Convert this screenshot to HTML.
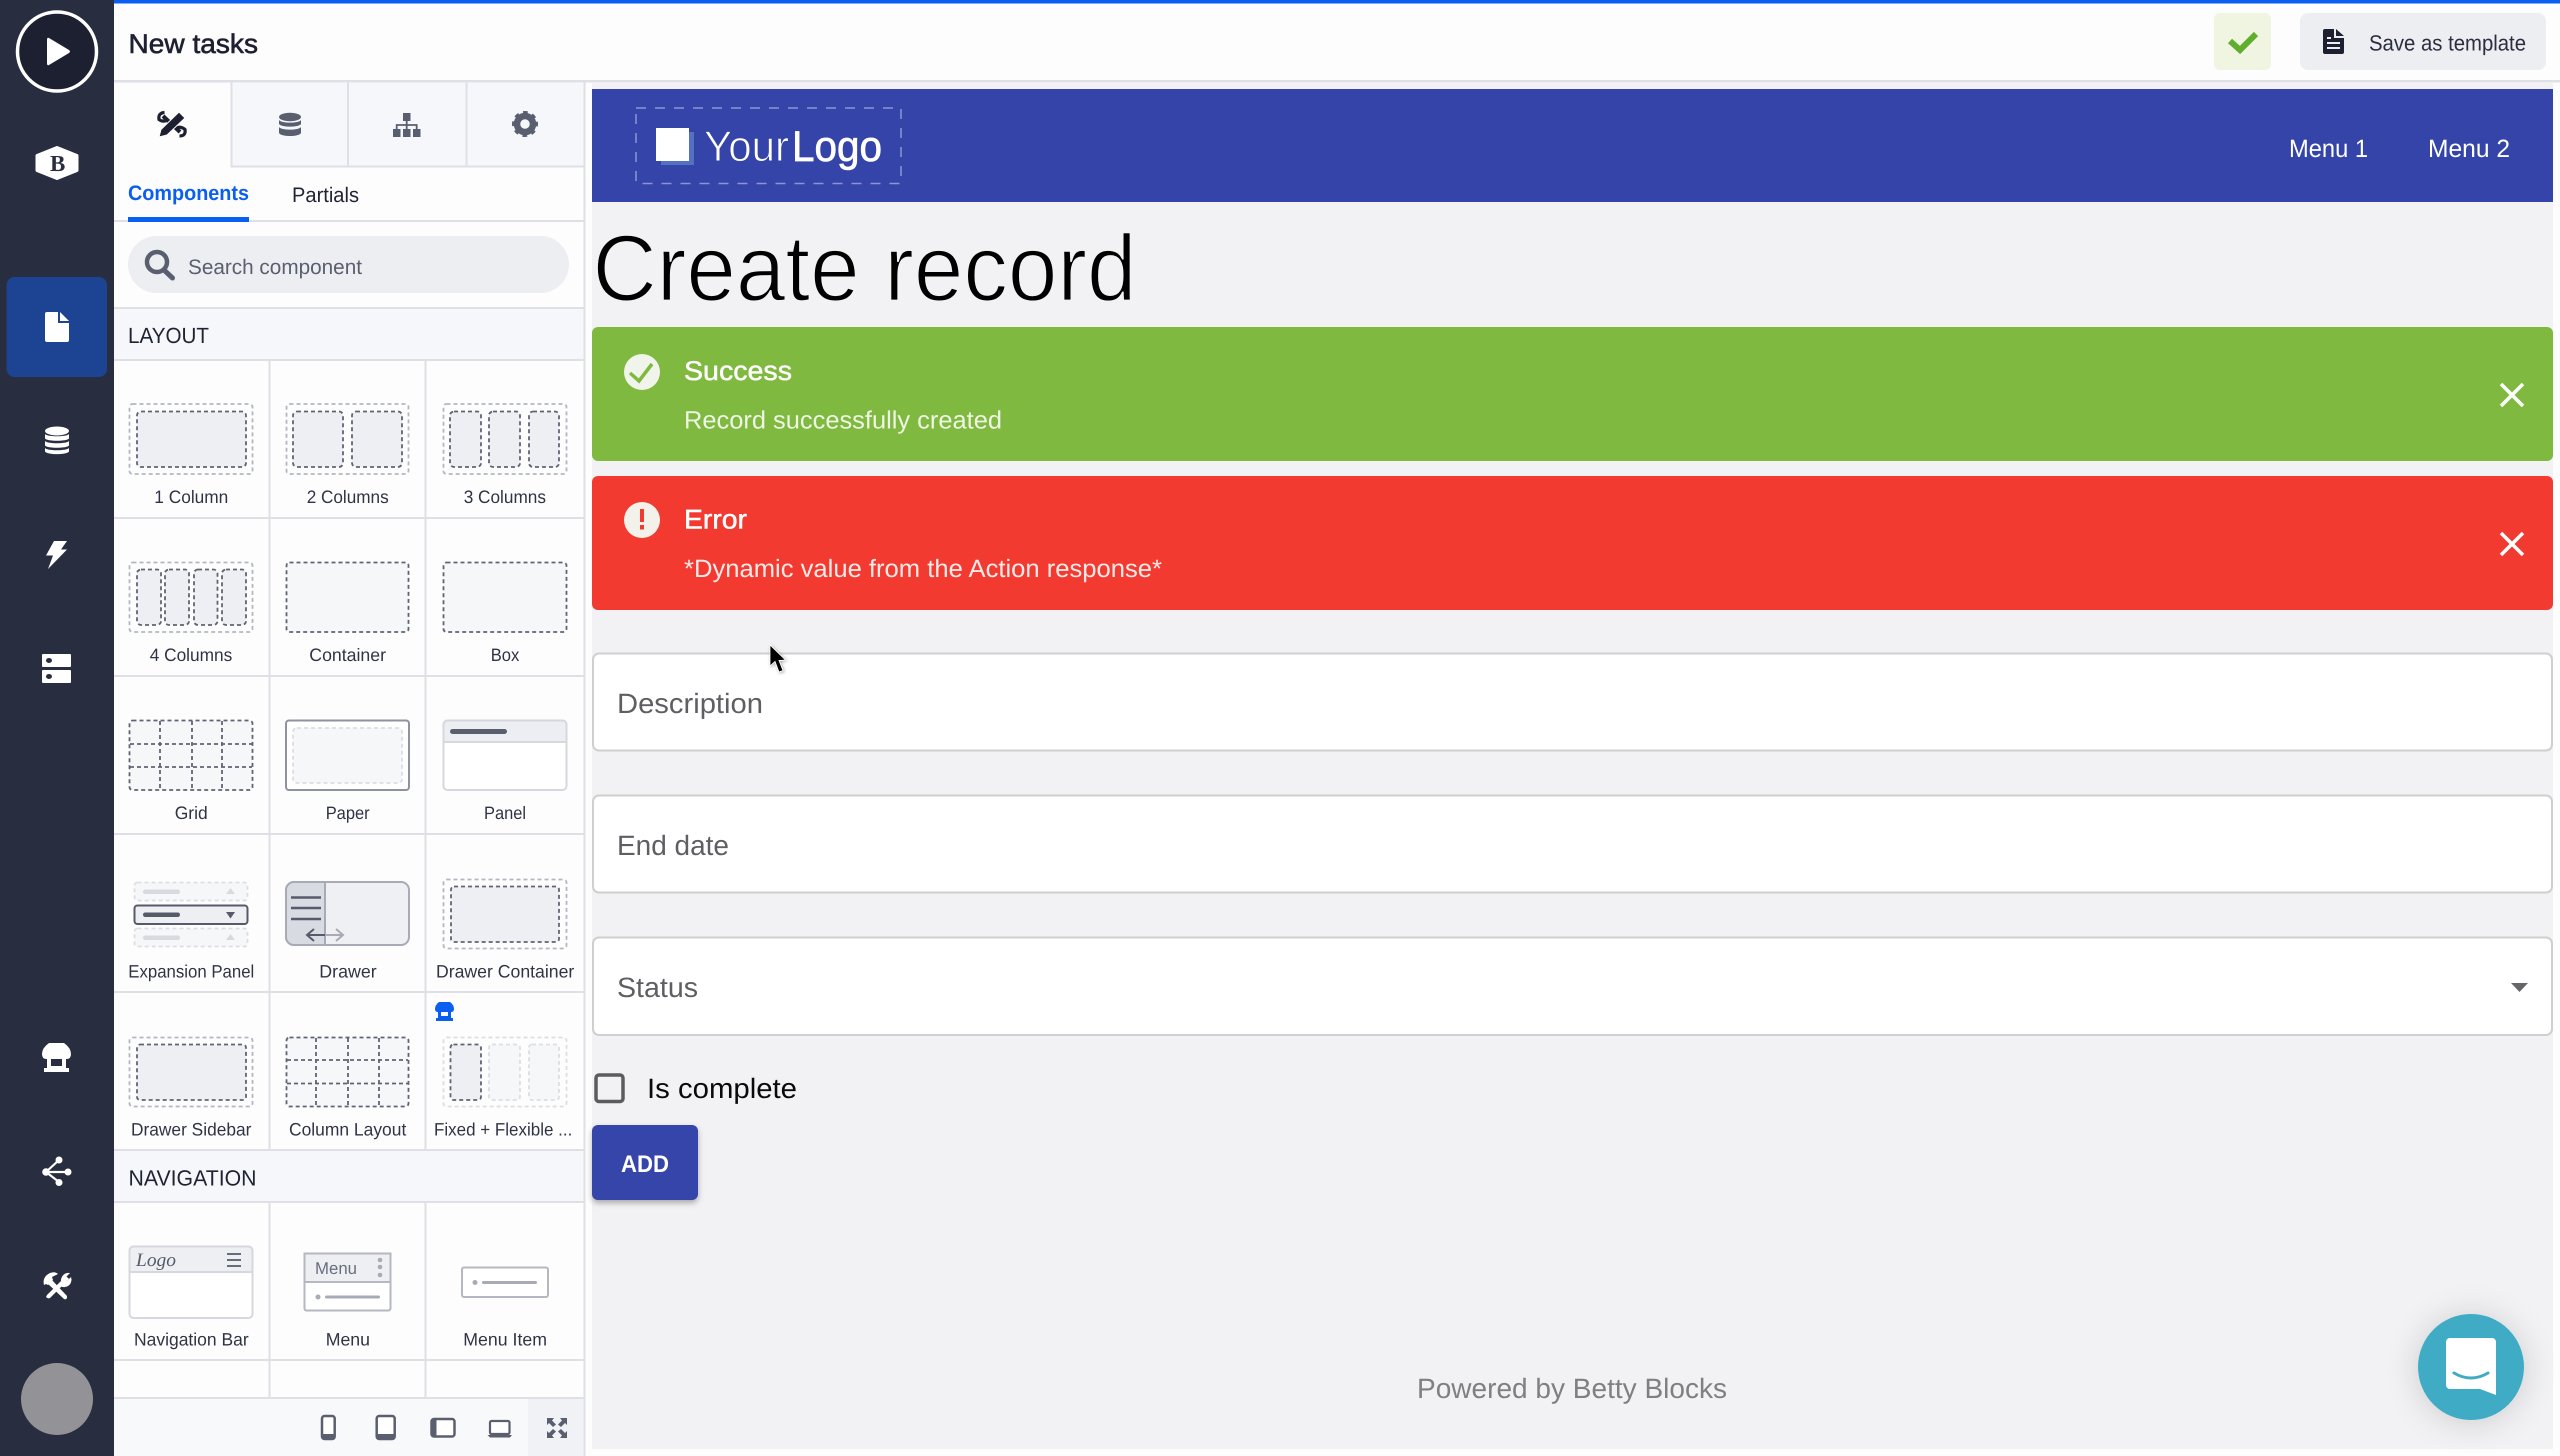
<!DOCTYPE html>
<html lang="en"><head><meta charset="utf-8"><title>New tasks</title>
<style>
html,body{margin:0;padding:0;width:2560px;height:1456px;overflow:hidden;background:#fdfdfe}
svg{position:absolute;left:0;top:0;display:block}
text{font-family:"Liberation Sans",Arial,sans-serif;text-rendering:geometricPrecision}
.lb{font-size:18px;fill:#2f3344}
.o{fill:none;stroke:#b4b7c1;stroke-width:1.800;stroke-dasharray:4 3}
.oo{fill:none;stroke:#dcdee3;stroke-width:1.800;stroke-dasharray:4 3}
.i{fill:#eeeff2;stroke:#5f6475;stroke-width:1.800;stroke-dasharray:4 3}
.il{fill:#f6f7f9;stroke:#dcdee3;stroke-width:1.800;stroke-dasharray:4 3}
.d{fill:#f6f7f9;stroke:#5f6475;stroke-width:1.800;stroke-dasharray:4 3}
.dl{fill:none;stroke:#5f6475;stroke-width:1.800;stroke-dasharray:4 3}
.ln{stroke:#dfe0e6;stroke-width:2;fill:none}
.hi{fill:#5a5f70}
.w{fill:#fff}
</style></head>
<body>
<svg width="2560" height="1456" viewBox="0 0 2560 1456" xmlns="http://www.w3.org/2000/svg">
<!-- backgrounds -->
<rect width="2560" height="1456" fill="#fdfdfe"/>
<rect x="114" y="0" width="2446" height="3.500" fill="#0a5ff0"/>
<rect x="114" y="80" width="2446" height="2.500" fill="#dfe0e6"/>
<rect x="0" y="0" width="114" height="1456" fill="#282d40"/>

<!-- content area -->
<rect x="592" y="83" width="1961" height="1366" fill="#f2f1f4"/>
<rect x="592" y="89" width="1961" height="113" fill="#3544a9"/>

<!-- sidebar -->
<circle cx="57" cy="51.500" r="39.500" fill="#1d2030" stroke="#fff" stroke-width="3.500"/>
<path d="M49 38 L69 50 Q71 51.500 69 53 L49 65 Q47 66 47 63 V40 Q47 37 49 38Z" fill="#fff"/>
<path d="M57 147.500 L77 155.500 V170.500 L57 178.500 L37 170.500 V155.500Z" fill="#fff" stroke="#fff" stroke-width="3" stroke-linejoin="round"/>
<text x="50" y="171" style="font-family:'Liberation Serif',serif;font-weight:bold;font-size:23px" fill="#282d40">B</text>
<rect x="6.500" y="277" width="100.500" height="100" rx="8" fill="#1d4493"/>
<path d="M47 312 H58 V323 H69 V340 a2 2 0 0 1 -2 2 H47 a2 2 0 0 1 -2 -2 V314 a2 2 0 0 1 2 -2Z M60 312 L69 321 H60Z" fill="#fff"/>
<!-- db -->
<g fill="#fff">
<ellipse cx="57" cy="431" rx="12" ry="4.500"/>
<path d="M45 434 c2 3 22 3 24 0 v4.500 c-2 3 -22 3 -24 0Z"/>
<path d="M45 441 c2 3 22 3 24 0 v4.500 c-2 3 -22 3 -24 0Z"/>
<path d="M45 448 c2 3 22 3 24 0 v3.500 c-2 3.500 -22 3.500 -24 0Z"/>
</g>
<path d="M54 541 H67 L61 549.500 H67 L48 569 L53 555.500 H46Z" fill="#fff"/>
<g>
<rect x="42" y="654" width="29" height="13" rx="1" fill="#fff"/>
<rect x="42" y="670" width="29" height="13" rx="1" fill="#fff"/>
<ellipse cx="49" cy="660.500" rx="3" ry="2.500" fill="#282d40"/>
<ellipse cx="49" cy="676.500" rx="3" ry="2.500" fill="#282d40"/>
</g>
<path d="M49 1043 H64 Q71 1048 71 1054 Q71 1059 66.500 1059 H46.500 Q42 1059 42 1054 Q42 1048 49 1043Z M47 1059 h4 v7 h11 v-7 h4 v9 h3 v4 H44 v-4 h3Z" fill="#fff"/>
<g stroke="#fff" stroke-width="2.200" fill="none"><path d="M46 1172 H68 M46 1172 L59 1160 M46 1172 L59 1182"/></g>
<g fill="#fff"><circle cx="46" cy="1172" r="3.800"/><circle cx="59" cy="1160" r="3.500"/><circle cx="68" cy="1172" r="3.500"/><circle cx="59" cy="1182.500" r="3.500"/></g>
<g fill="#fff">
<path d="M47 1295 L66 1276 L69 1279 L50 1298 Q48 1299 46 1297Z"/>
<path d="M62 1284 A7.500 7.500 0 0 1 70 1273 L65 1278 L67 1281 L71 1277 A7.500 7.500 0 0 1 60 1286Z"/>
<path d="M67 1296 L51 1279 L47 1283 L64 1299 Q66 1300 67 1298Z"/>
<path d="M44 1285 Q42 1277 50 1273 Q55 1271 58 1274 L52 1277 L53 1280 L48 1285 L46 1284Z"/>
</g>
<circle cx="57" cy="1399" r="36" fill="#939297"/>

<!-- header -->
<text x="128.500" y="53" font-size="27" fill="#1d2030" stroke="#1d2030" stroke-width=".6" textLength="129.500" lengthAdjust="spacingAndGlyphs">New tasks</text>
<rect x="2214" y="13" width="57" height="57" rx="6" fill="#eff5e0"/>
<path d="M2230 41 L2240 50 L2256 34" fill="none" stroke="#5fae2e" stroke-width="6"/>
<rect x="2300" y="13" width="246" height="57" rx="8" fill="#edeef2"/>
<path d="M2325 29 H2334 V38 H2344 V52 a2 2 0 0 1 -2 2 H2325 a2 2 0 0 1 -2 -2 V31 a2 2 0 0 1 2 -2Z M2336 29 L2344 36 H2336Z" fill="#1d2030"/>
<g stroke="#edeef2" stroke-width="2"><path d="M2327 38 H2331 M2327 43 H2340 M2327 48 H2340"/></g>
<text x="2369" y="50.500" font-size="22" fill="#2a2e3f" textLength="157" lengthAdjust="spacingAndGlyphs">Save as template</text>

<!-- left panel tabs -->
<rect x="232" y="83" width="352" height="83" fill="#f6f7fa"/>
<path class="ln" d="M231.500 82 V166.500 H584 M348 82 V166 M466.500 82 V166"/>
<!-- tools tab icon -->
<g fill="none" stroke="#1d2030">
<path d="M163 116 L180 132" stroke-width="4"/>
<path d="M164.500 112.500 Q158 113 159 119.500 Q163 122.500 167.500 120" stroke-width="3.200"/>
<path d="M179.500 136 Q186 136 185 129.500 Q181 126 176 128" stroke-width="3.200"/>
</g>
<path d="M179 112 L185 118 L167 135 L159 137 L161 129.500Z" fill="#1d2030" stroke="#fdfdfe" stroke-width="1"/>
<g class="hi">
<ellipse cx="290" cy="117" rx="11" ry="4.200"/>
<path d="M279 120 c2 3.500 20 3.500 22 0 v4 c-2 3.500 -20 3.500 -22 0Z"/>
<path d="M279 127 c2 3.500 20 3.500 22 0 v6 c-2 4 -20 4 -22 0Z"/>
</g>
<g class="hi">
<rect x="403" y="113" width="7.500" height="8"/>
<rect x="393" y="129" width="7.500" height="8"/><rect x="403" y="129" width="7.500" height="8"/><rect x="413" y="129" width="7.500" height="8"/>
</g>
<path d="M406.700 120 V129 M396.700 129 V125 H416.700 V129" fill="none" stroke="#5a5f70" stroke-width="1.800"/>
<circle cx="525" cy="124" r="8" fill="none" stroke="#5a5f70" stroke-width="6.500"/>
<circle cx="525" cy="124" r="11" fill="none" stroke="#5a5f70" stroke-width="4" stroke-dasharray="4.320 4.320" transform="rotate(-11 525 124)"/>

<text x="128" y="200" font-size="21" font-weight="bold" fill="#0a5ff0" textLength="121" lengthAdjust="spacingAndGlyphs">Components</text>
<text x="292" y="202" font-size="21" fill="#1f2333" textLength="67" lengthAdjust="spacingAndGlyphs">Partials</text>
<path class="ln" d="M114 221 H584"/>
<rect x="128" y="217" width="121" height="5" fill="#0a5ff0"/>

<rect x="128" y="236" width="441" height="57" rx="28.500" fill="#edeef2"/>
<circle cx="157" cy="262" r="10" fill="none" stroke="#5a5f70" stroke-width="4.500"/>
<path d="M164 270 L172.500 278" stroke="#5a5f70" stroke-width="5" stroke-linecap="round"/>
<text x="188" y="274" font-size="21" fill="#5a5f70" textLength="174" lengthAdjust="spacingAndGlyphs">Search component</text>

<rect x="114" y="308" width="470" height="52" fill="#f6f7fa"/>
<path class="ln" d="M114 308 H584 M114 360 H584"/>
<text x="128" y="343" font-size="22" fill="#1f2333" textLength="81" lengthAdjust="spacingAndGlyphs">LAYOUT</text>

<rect x="114" y="1150" width="470" height="52" fill="#f6f7fa"/>
<text x="128.500" y="1185.500" font-size="22" fill="#1f2333" textLength="128" lengthAdjust="spacingAndGlyphs">NAVIGATION</text>

<rect x="114" y="1398" width="470" height="58" fill="#f8f9fb"/>
<rect x="528" y="1398" width="56" height="58" fill="#f1f2f6"/>

<path class="ln" d="M114 518 H584 M114 676 H584 M114 834 H584 M114 992 H584 M114 1150 H584 M114 1202 H584 M114 1360 H584 M114 1398 H584 M269.500 360 V1150 M425.500 360 V1150 M269.500 1202 V1398 M425.500 1202 V1398 M584.500 82 V1456"/>

<!-- row 1 -->
<rect class="o" x="129.500" y="404" width="123" height="70" rx="3"/>
<rect class="i" x="137" y="411.500" width="109" height="55.500" rx="4"/>
<rect class="o" x="286.500" y="404" width="122" height="70" rx="3"/>
<rect class="i" x="293" y="411.500" width="50" height="55.500" rx="4"/>
<rect class="i" x="352" y="411.500" width="50" height="55.500" rx="4"/>
<rect class="o" x="443.500" y="404" width="123" height="70" rx="3"/>
<rect class="i" x="450" y="411.500" width="31" height="55.500" rx="4"/>
<rect class="i" x="489" y="411.500" width="31" height="55.500" rx="4"/>
<rect class="i" x="529" y="411.500" width="30" height="55.500" rx="4"/>
<text class="lb" x="154.300" y="503" textLength="74" lengthAdjust="spacingAndGlyphs">1 Column</text>
<text class="lb" x="306.700" y="503" textLength="82" lengthAdjust="spacingAndGlyphs">2 Columns</text>
<text class="lb" x="463.700" y="503" textLength="82.300" lengthAdjust="spacingAndGlyphs">3 Columns</text>

<!-- row 2 -->
<rect class="o" x="129.500" y="562.500" width="123" height="69.500" rx="3"/>
<rect class="i" x="137" y="569.500" width="24" height="55.500" rx="4"/>
<rect class="i" x="165" y="569.500" width="24" height="55.500" rx="4"/>
<rect class="i" x="194" y="569.500" width="23.500" height="55.500" rx="4"/>
<rect class="i" x="222" y="569.500" width="24" height="55.500" rx="4"/>
<rect class="d" x="286.500" y="562.500" width="122" height="69.500" rx="3"/>
<rect class="d" x="443.500" y="562.500" width="123" height="69.500" rx="3"/>
<text class="lb" x="149.700" y="661" textLength="82.600" lengthAdjust="spacingAndGlyphs">4 Columns</text>
<text class="lb" x="309.300" y="661" textLength="76.700" lengthAdjust="spacingAndGlyphs">Container</text>
<text class="lb" x="490.700" y="661" textLength="28.600" lengthAdjust="spacingAndGlyphs">Box</text>

<!-- row 3 -->
<rect class="d" x="129.500" y="720.500" width="123" height="69.500" rx="3"/>
<path class="dl" d="M160 721 V790 M192 721 V790 M222 721 V790 M130 744 H252 M130 767 H252"/>
<rect x="286" y="720.500" width="123" height="69.500" rx="3" fill="#fff" stroke="#8f93a0" stroke-width="2"/>
<rect class="il" x="293" y="728" width="109" height="55" rx="4"/>
<rect x="443.500" y="720.500" width="123" height="69.500" rx="4" fill="#fff" stroke="#d6d8df" stroke-width="2"/>
<path d="M443.500 742 V724.500 a4 4 0 0 1 4 -4 H562.500 a4 4 0 0 1 4 4 V742Z" fill="#edeef2" stroke="#d6d8df" stroke-width="2"/>
<rect x="450" y="729" width="57" height="5" rx="2.500" fill="#5a5f70"/>
<text class="lb" x="174.700" y="819" textLength="33" lengthAdjust="spacingAndGlyphs">Grid</text>
<text class="lb" x="325.700" y="819" textLength="44" lengthAdjust="spacingAndGlyphs">Paper</text>
<text class="lb" x="484" y="819" textLength="42" lengthAdjust="spacingAndGlyphs">Panel</text>

<!-- row 4 -->
<rect class="il" x="134.500" y="882.500" width="113" height="18" rx="3"/>
<rect x="143" y="889.500" width="37" height="4.500" rx="2.200" fill="#d8dae0"/>
<path d="M226 894 L235 894 L230.500 888Z" fill="#d8dae0"/>
<rect x="134.500" y="905.500" width="113" height="18.500" rx="3" fill="#eeeff2" stroke="#565b6c" stroke-width="2"/>
<rect x="143" y="912.500" width="37" height="4.500" rx="2.200" fill="#565b6c"/>
<path d="M226 912 L235 912 L230.500 918.500Z" fill="#565b6c"/>
<rect class="il" x="134.500" y="928.500" width="113" height="18" rx="3"/>
<rect x="143" y="935.500" width="37" height="4.500" rx="2.200" fill="#d8dae0"/>
<path d="M226 940 L235 940 L230.500 934Z" fill="#d8dae0"/>

<rect x="286" y="882" width="123" height="63" rx="8" fill="#eff0f3" stroke="#a8abb6" stroke-width="2"/>
<path d="M325 882 H294 a8 8 0 0 0 -8 8 V937 a8 8 0 0 0 8 8 H325Z" fill="#d9dbe3" stroke="#a8abb6" stroke-width="2"/>
<path d="M291 897.500 H321 M291 908 H321 M291 919 H321" stroke="#565b6c" stroke-width="2.500"/>
<path d="M325 935 H308 M314 929 L307 935 L314 941" fill="none" stroke="#565b6c" stroke-width="2"/>
<path d="M325 935 H342 M336 929 L343 935 L336 941" fill="none" stroke="#a8abb6" stroke-width="2"/>

<rect class="o" x="443.500" y="879.500" width="123" height="69" rx="3"/>
<rect class="i" x="451" y="886.500" width="108" height="55.500" rx="3"/>
<text class="lb" x="128.300" y="977.500" textLength="126" lengthAdjust="spacingAndGlyphs">Expansion Panel</text>
<text class="lb" x="319.300" y="977.500" textLength="57.400" lengthAdjust="spacingAndGlyphs">Drawer</text>
<text class="lb" x="436" y="977.500" textLength="138.300" lengthAdjust="spacingAndGlyphs">Drawer Container</text>

<!-- row 5 -->
<rect class="o" x="129.500" y="1037.500" width="123" height="69" rx="3"/>
<rect class="i" x="137" y="1044.500" width="109" height="55.500" rx="3"/>
<rect class="d" x="286.500" y="1037.500" width="122" height="69" rx="3"/>
<path class="dl" d="M316 1038 V1106 M348 1038 V1106 M379 1038 V1106 M287 1060 H408 M287 1083.500 H408"/>
<rect class="oo" x="443.500" y="1037.500" width="123" height="69" rx="3"/>
<rect class="i" x="450.500" y="1044.500" width="30.500" height="55.500" rx="3"/>
<rect class="il" x="489" y="1044.500" width="31" height="55.500" rx="3"/>
<rect class="il" x="529" y="1044.500" width="30" height="55.500" rx="3"/>
<path d="M439 1002 H450 Q454 1005 454 1009 Q454 1012 451 1012 H438 Q435 1012 435 1009 Q435 1005 439 1002Z M438 1012 h3 v4 h7 v-4 h3 v6 h2 v3 H436 v-3 h2Z" fill="#0a5ff0"/>
<text class="lb" x="131" y="1135.500" textLength="120.400" lengthAdjust="spacingAndGlyphs">Drawer Sidebar</text>
<text class="lb" x="289" y="1135.500" textLength="117.300" lengthAdjust="spacingAndGlyphs">Column Layout</text>
<text class="lb" x="434" y="1135.500" textLength="138.300" lengthAdjust="spacingAndGlyphs">Fixed + Flexible ...</text>

<!-- row 6 -->
<rect x="129.500" y="1246.500" width="123" height="71.500" rx="4" fill="#fff" stroke="#d6d8df" stroke-width="2"/>
<path d="M129.500 1272 V1250.500 a4 4 0 0 1 4 -4 H248.500 a4 4 0 0 1 4 4 V1272Z" fill="#eeeff2" stroke="#d6d8df" stroke-width="2"/>
<text x="136" y="1266" style="font-family:'Liberation Serif',serif;font-style:italic;font-size:19px" fill="#565b6c" textLength="40" lengthAdjust="spacingAndGlyphs">Logo</text>
<path d="M227 1254 H241 M227 1260 H241 M227 1266 H241" stroke="#565b6c" stroke-width="1.800"/>

<rect x="304.500" y="1253.500" width="86" height="57" rx="2" fill="#fff" stroke="#b5b8c2" stroke-width="2"/>
<rect x="304.500" y="1253.500" width="86" height="28.500" fill="#eeeff2" stroke="#b5b8c2" stroke-width="2"/>
<text x="315" y="1274" font-size="17" fill="#6a6f7f" textLength="42" lengthAdjust="spacingAndGlyphs">Menu</text>
<g fill="#a8abb6"><circle cx="380" cy="1260" r="2.300"/><circle cx="380" cy="1267" r="2.300"/><circle cx="380" cy="1275" r="2.300"/>
<circle cx="318" cy="1297" r="2.500"/></g>
<rect x="325" y="1295.500" width="55" height="3" rx="1.500" fill="#a8abb6"/>

<rect x="462" y="1267.500" width="86" height="29.500" rx="2" fill="#fff" stroke="#b5b8c2" stroke-width="2"/>
<circle cx="475" cy="1282.500" r="2.500" fill="#a8abb6"/>
<rect x="482" y="1281" width="55" height="3" rx="1.500" fill="#a8abb6"/>
<text class="lb" x="134" y="1345.500" textLength="114.700" lengthAdjust="spacingAndGlyphs">Navigation Bar</text>
<text class="lb" x="325.700" y="1345.500" textLength="44.300" lengthAdjust="spacingAndGlyphs">Menu</text>
<text class="lb" x="463.300" y="1345.500" textLength="83.700" lengthAdjust="spacingAndGlyphs">Menu Item</text>

<!-- footer icons -->
<rect x="322" y="1416" width="12.700" height="23" rx="2.500" fill="#fff" stroke="#5a5f70" stroke-width="2.500"/>
<path d="M322 1434 H334.700 V1437 a2 2 0 0 1 -2 2 H324 a2 2 0 0 1 -2 -2Z" fill="#5a5f70"/>
<rect x="376.700" y="1416" width="18" height="23" rx="2.500" fill="#fff" stroke="#5a5f70" stroke-width="2.500"/>
<path d="M376.700 1434 H394.700 V1437 a2 2 0 0 1 -2 2 H378.700 a2 2 0 0 1 -2 -2Z" fill="#5a5f70"/>
<rect x="431.500" y="1419" width="23" height="17.500" rx="2.500" fill="#fff" stroke="#5a5f70" stroke-width="2.500"/>
<path d="M431.500 1419 h5 v17.500 h-5Z" fill="#5a5f70"/>
<rect x="490" y="1421" width="19.500" height="13" rx="1.500" fill="#fff" stroke="#5a5f70" stroke-width="2.200"/>
<path d="M487.500 1435 H512 L510 1437.500 H490Z" fill="#5a5f70"/>
<path d="M547 1418 H554 L552 1420.500 L556 1424.500 L553 1427 L549 1423 L547 1425Z M567 1418 H560 L562 1420.500 L558 1424.500 L561 1427 L565 1423 L567 1425Z M547 1438 H554 L552 1435.500 L556 1431.500 L553 1429 L549 1433 L547 1431Z M567 1438 H560 L562 1435.500 L558 1431.500 L561 1429 L565 1433 L567 1431Z" fill="#5a5f70"/>

<!-- navbar content -->
<rect x="636" y="108" width="265" height="75.500" fill="none" stroke="#8b96d1" stroke-width="1.500" stroke-dasharray="10 9"/>
<rect x="661" y="132" width="33" height="33" fill="#5570c0"/>
<rect x="656" y="128" width="33" height="33" fill="#fff"/>
<text x="704" y="161" font-size="43" fill="#fff" stroke="#3544a9" stroke-width=".9" paint-order="fill stroke" textLength="85" lengthAdjust="spacingAndGlyphs">Your</text>
<text x="792" y="161" font-size="43" fill="#fff" stroke="#fff" stroke-width=".7" textLength="90" lengthAdjust="spacingAndGlyphs">Logo</text>
<text x="2289" y="157" font-size="25" fill="#fff" textLength="79" lengthAdjust="spacingAndGlyphs">Menu 1</text>
<text x="2428" y="157" font-size="25" fill="#fff" textLength="82" lengthAdjust="spacingAndGlyphs">Menu 2</text>

<!-- heading -->
<text x="592.500" y="300.500" font-size="94" fill="#000" stroke="#f2f1f4" stroke-width="1.800" paint-order="fill stroke" textLength="544" lengthAdjust="spacingAndGlyphs">Create record</text>

<!-- alerts -->
<rect x="592" y="327" width="1961" height="134" rx="6" fill="#7fb93f"/>
<circle cx="642" cy="372" r="18" fill="#f1f4ea"/>
<path d="M630 373 L639 381 L652 364" fill="none" stroke="#7fb93f" stroke-width="3.500"/>
<text x="684" y="380" font-size="27" fill="#fff" stroke="#fff" stroke-width=".5" textLength="108" lengthAdjust="spacingAndGlyphs">Success</text>
<text x="684" y="428.500" font-size="25" fill="#eef5e4" textLength="318" lengthAdjust="spacingAndGlyphs">Record successfully created</text>
<path d="M2501 384 L2523 406 M2523 384 L2501 406" stroke="#fff" stroke-width="3.500"/>

<rect x="592" y="476" width="1961" height="134" rx="6" fill="#f33a30"/>
<circle cx="642" cy="520" r="18" fill="#f3f2ea"/>
<rect x="640" y="509" width="4" height="13" fill="#f33a30"/><rect x="640" y="525" width="4" height="4.500" fill="#f33a30"/>
<text x="684" y="528.500" font-size="27" fill="#fff" stroke="#fff" stroke-width=".5" textLength="63" lengthAdjust="spacingAndGlyphs">Error</text>
<text x="684" y="577" font-size="25" fill="#fdeae8" textLength="478" lengthAdjust="spacingAndGlyphs">*Dynamic value from the Action response*</text>
<path d="M2501 533 L2523 555 M2523 533 L2501 555" stroke="#fff" stroke-width="3.500"/>

<!-- form -->
<rect x="593" y="653.500" width="1959" height="97" rx="6" fill="#fff" stroke="#cfcfcf" stroke-width="2"/>
<rect x="593" y="795.500" width="1959" height="97" rx="6" fill="#fff" stroke="#cfcfcf" stroke-width="2"/>
<rect x="593" y="937.500" width="1959" height="97.500" rx="6" fill="#fff" stroke="#cfcfcf" stroke-width="2"/>
<text x="617" y="713" font-size="28" fill="#5f5f63" textLength="146" lengthAdjust="spacingAndGlyphs">Description</text>
<text x="617" y="855" font-size="28" fill="#5f5f63" textLength="112" lengthAdjust="spacingAndGlyphs">End date</text>
<text x="617" y="997" font-size="28" fill="#5f5f63" textLength="81" lengthAdjust="spacingAndGlyphs">Status</text>
<path d="M2511 983 H2528 L2519.500 992Z" fill="#666669"/>
<rect x="596" y="1075" width="27" height="26.500" rx="3" fill="none" stroke="#5c5c5f" stroke-width="3.500"/>
<text x="647" y="1098" font-size="28" fill="#0a0a0a" textLength="150" lengthAdjust="spacingAndGlyphs">Is complete</text>
<defs><filter id="s" x="-20%" y="-20%" width="140%" height="150%"><feDropShadow dx="0" dy="3" stdDeviation="3" flood-color="#000" flood-opacity=".3"/></filter>
<filter id="c" x="-60%" y="-60%" width="220%" height="220%"><feDropShadow dx="0" dy="2" stdDeviation="16" flood-color="#000" flood-opacity=".16"/></filter>
<filter id="m" x="-50%" y="-50%" width="200%" height="200%"><feDropShadow dx="1" dy="1" stdDeviation="1.500" flood-color="#000" flood-opacity=".35"/></filter></defs>
<rect x="592" y="1125" width="106" height="75" rx="6" fill="#3544a9" filter="url(#s)"/>
<text x="621" y="1172" font-size="24" font-weight="bold" fill="#fff" textLength="48" lengthAdjust="spacingAndGlyphs">ADD</text>
<text x="1417" y="1398" font-size="28" fill="#7f7f84" textLength="310" lengthAdjust="spacingAndGlyphs">Powered by Betty Blocks</text>

<!-- cursor -->
<path d="M770 645 L770 666 L775 661.500 L779 672 L783 670.500 L779 660.500 L785.500 660Z" fill="#000" stroke="#fff" stroke-width=".8" filter="url(#m)"/>

<!-- chat -->
<circle cx="2471" cy="1367" r="53" fill="#40abc4" filter="url(#c)"/>
<path d="M2450 1338 H2492 a4 4 0 0 1 4 4 V1395 L2480 1389 H2450 a4 4 0 0 1 -4 -4 V1342 a4 4 0 0 1 4 -4Z" fill="#fff"/>
<path d="M2454 1373 Q2471 1383 2488 1373" fill="none" stroke="#40abc4" stroke-width="3" stroke-linecap="round"/>
</svg>
</body></html>
